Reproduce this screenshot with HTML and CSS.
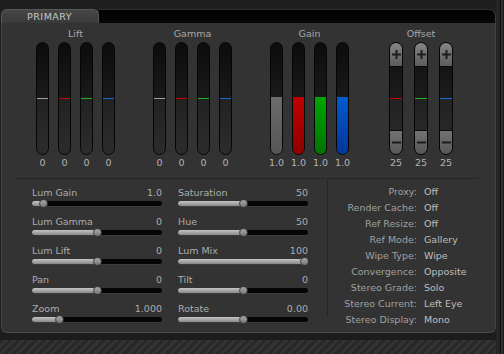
FILE: index.html
```html
<!DOCTYPE html>
<html lang="en">
<head>
  <meta charset="UTF-8">
  <title>Primary</title>
  <link rel="stylesheet" href="styles.css">
</head>
<body>
  <div class="main">
    <div class="top-space"></div>
    <div class="tabs">
      <div class="tab">PRIMARY</div>
      <div class="tab-bar"></div>
    </div>

    <div class="panel">
      <!-- Faders -->
      <div class="wheels">
        <div class="group">
          <div class="group-title">Lift</div>
          <div class="faders">
            <div class="col"><div class="fader"><span class="mark white"></span></div><span class="num">0</span></div>
            <div class="col"><div class="fader"><span class="mark red"></span></div><span class="num">0</span></div>
            <div class="col"><div class="fader"><span class="mark green"></span></div><span class="num">0</span></div>
            <div class="col"><div class="fader"><span class="mark blue"></span></div><span class="num">0</span></div>
          </div>
        </div>
        <div class="group">
          <div class="group-title">Gamma</div>
          <div class="faders">
            <div class="col"><div class="fader"><span class="mark white"></span></div><span class="num">0</span></div>
            <div class="col"><div class="fader"><span class="mark red"></span></div><span class="num">0</span></div>
            <div class="col"><div class="fader"><span class="mark green"></span></div><span class="num">0</span></div>
            <div class="col"><div class="fader"><span class="mark blue"></span></div><span class="num">0</span></div>
          </div>
        </div>
        <div class="group">
          <div class="group-title">Gain</div>
          <div class="faders">
            <div class="col"><div class="fader"><span class="level white"></span></div><span class="num">1.0</span></div>
            <div class="col"><div class="fader"><span class="level red"></span></div><span class="num">1.0</span></div>
            <div class="col"><div class="fader"><span class="level green"></span></div><span class="num">1.0</span></div>
            <div class="col"><div class="fader"><span class="level blue"></span></div><span class="num">1.0</span></div>
          </div>
        </div>
        <div class="group offset">
          <div class="group-title">Offset</div>
          <div class="faders">
            <div class="col">
              <div class="fader stepper">
                <div class="btn"><svg width="9" height="9" viewBox="0 0 9 9"><path d="M4.5 0v9M0 4.5h9" stroke="#1c1c1c" stroke-width="2"/></svg></div>
                <div class="mid"><span class="mark red"></span></div>
                <div class="btn"><svg width="9" height="9" viewBox="0 0 9 9"><path d="M0 4.5h9" stroke="#1c1c1c" stroke-width="2"/></svg></div>
              </div>
              <span class="num">25</span>
            </div>
            <div class="col">
              <div class="fader stepper">
                <div class="btn"><svg width="9" height="9" viewBox="0 0 9 9"><path d="M4.5 0v9M0 4.5h9" stroke="#1c1c1c" stroke-width="2"/></svg></div>
                <div class="mid"><span class="mark green"></span></div>
                <div class="btn"><svg width="9" height="9" viewBox="0 0 9 9"><path d="M0 4.5h9" stroke="#1c1c1c" stroke-width="2"/></svg></div>
              </div>
              <span class="num">25</span>
            </div>
            <div class="col">
              <div class="fader stepper">
                <div class="btn"><svg width="9" height="9" viewBox="0 0 9 9"><path d="M4.5 0v9M0 4.5h9" stroke="#1c1c1c" stroke-width="2"/></svg></div>
                <div class="mid"><span class="mark blue"></span></div>
                <div class="btn"><svg width="9" height="9" viewBox="0 0 9 9"><path d="M0 4.5h9" stroke="#1c1c1c" stroke-width="2"/></svg></div>
              </div>
              <span class="num">25</span>
            </div>
          </div>
        </div>
      </div>

      <div class="rule"></div>

      <!-- Sliders and settings -->
      <div class="controls">
        <div class="slider-col">
          <div class="slider"><div class="head"><span>Lum Gain</span><span>1.0</span></div><div class="track" style="--v:8.5%"><div class="fill"></div><div class="knob"></div></div></div>
          <div class="slider"><div class="head"><span>Lum Gamma</span><span>0</span></div><div class="track" style="--v:50%"><div class="fill"></div><div class="knob"></div></div></div>
          <div class="slider"><div class="head"><span>Lum Lift</span><span>0</span></div><div class="track" style="--v:50%"><div class="fill"></div><div class="knob"></div></div></div>
          <div class="slider"><div class="head"><span>Pan</span><span>0</span></div><div class="track" style="--v:50%"><div class="fill"></div><div class="knob"></div></div></div>
          <div class="slider"><div class="head"><span>Zoom</span><span>1.000</span></div><div class="track" style="--v:21.5%"><div class="fill"></div><div class="knob"></div></div></div>
        </div>
        <div class="slider-col">
          <div class="slider"><div class="head"><span>Saturation</span><span>50</span></div><div class="track" style="--v:50%"><div class="fill"></div><div class="knob"></div></div></div>
          <div class="slider"><div class="head"><span>Hue</span><span>50</span></div><div class="track" style="--v:50%"><div class="fill"></div><div class="knob"></div></div></div>
          <div class="slider"><div class="head"><span>Lum Mix</span><span>100</span></div><div class="track" style="--v:97%"><div class="fill"></div><div class="knob"></div></div></div>
          <div class="slider"><div class="head"><span>Tilt</span><span>0</span></div><div class="track" style="--v:50%"><div class="fill"></div><div class="knob"></div></div></div>
          <div class="slider"><div class="head"><span>Rotate</span><span>0.00</span></div><div class="track" style="--v:50%"><div class="fill"></div><div class="knob"></div></div></div>
        </div>
        <div class="vline"></div>
        <div class="info">
          <div class="info-row"><span class="key">Proxy:</span><span class="val">Off</span></div>
          <div class="info-row"><span class="key">Render Cache:</span><span class="val">Off</span></div>
          <div class="info-row"><span class="key">Ref Resize:</span><span class="val">Off</span></div>
          <div class="info-row"><span class="key">Ref Mode:</span><span class="val">Gallery</span></div>
          <div class="info-row"><span class="key">Wipe Type:</span><span class="val">Wipe</span></div>
          <div class="info-row"><span class="key">Convergence:</span><span class="val">Opposite</span></div>
          <div class="info-row"><span class="key">Stereo Grade:</span><span class="val">Solo</span></div>
          <div class="info-row"><span class="key">Stereo Current:</span><span class="val">Left Eye</span></div>
          <div class="info-row"><span class="key">Stereo Display:</span><span class="val">Mono</span></div>
        </div>
      </div>
    </div>

    <div class="shade"></div>
    <div class="carbon"></div>
  </div>
  <div class="edge"></div>
</body>
</html>
```

FILE: styles.css
```css
/* Base */
* {
  box-sizing: border-box;
}

html, body {
  margin: 0;
  padding: 0;
}

body {
  width: 504px;
  height: 354px;
  overflow: hidden;
  display: flex;
  background: #1f1f1f;
  font-family: "DejaVu Sans", sans-serif;
  font-size: 9.5px;
  color: #adadad;
}

.main {
  width: 496px;
  display: flex;
  flex-direction: column;
}

/* right window edge */
.edge {
  flex: 1;
  background: linear-gradient(90deg, #252525 0 4px, #0e0e0e 4px 5px, #303030 5px 7px, #1a1a1a 7px);
}

.top-space {
  height: 9px;
}

/* Tabs */
.tabs {
  height: 14px;
  display: flex;
  margin-left: 1px;
}

.tab {
  width: 98px;
  padding-left: 25px;
  border: 1px solid #575757;
  border-bottom: none;
  border-radius: 6px 6px 0 0;
  background: linear-gradient(#474747, #393939);
  color: #c6c6c6;
  line-height: 13px;
  letter-spacing: 0.5px;
}

.tab-bar {
  flex: 1;
  background: linear-gradient(#000, #080808);
  border-top: 1px solid #2e2e2e;
  border-right: 1px solid #3c3c3c;
  border-radius: 0 7px 0 0;
}

/* Panel */
.panel {
  height: 310px;
  margin-left: 1px;
  border: 1px solid #444;
  border-top: none;
  border-bottom-color: #4a4a4a;
  border-radius: 0 0 6px 6px;
  background: #333;
}

.wheels {
  display: flex;
  align-items: flex-start;
  padding: 5px 0 0 34px;
}

.group {
  display: flex;
  flex-direction: column;
  align-items: center;
}

.group + .group {
  margin-left: 38px;
}

.group.offset {
  margin-left: 40px;
}

.group-title {
  line-height: 12px;
  margin-bottom: 2px;
  color: #a8a8a8;
}

.faders {
  display: flex;
  gap: 9px;
}

.offset .faders {
  gap: 11px;
}

.col {
  width: 13px;
  display: flex;
  flex-direction: column;
  align-items: center;
}

.offset .col {
  width: 14px;
}

.fader {
  position: relative;
  width: 100%;
  height: 113px;
  border: 1px solid #060606;
  border-radius: 7px;
  background: linear-gradient(#0c0c0c, #1a1a1a 50%, #222 50%, #2c2c2c);
  overflow: hidden;
}

.mark {
  position: absolute;
  left: 0;
  right: 0;
  top: 55px;
  height: 1px;
}

.mark.white { background: #a0a0a0; }
.mark.red { background: #c40000; }
.mark.green { background: #20b020; }
.mark.blue { background: #1a66d8; }

.level {
  position: absolute;
  left: 0;
  right: 0;
  top: 54px;
  bottom: 0;
}

.level.white { background: linear-gradient(#6c6c6c, #555); }
.level.red { background: linear-gradient(#c00000, #8e0000); }
.level.green { background: linear-gradient(#00a600, #007400); }
.level.blue { background: linear-gradient(#005ad0, #00379a); }

.num {
  margin-top: 2px;
  line-height: 12px;
  color: #b4b4b4;
  white-space: nowrap;
}

/* Offset steppers */
.stepper {
  display: flex;
  flex-direction: column;
  background: #1b1b1b;
}

.btn {
  height: 24px;
  display: flex;
  align-items: center;
  justify-content: center;
  background: linear-gradient(#858585, #5c5c5c);
}

.btn:first-child {
  border-bottom: 1px solid #0a0a0a;
}

.btn:last-child {
  border-top: 1px solid #0a0a0a;
  background: linear-gradient(#727272, #575757);
}

.mid {
  position: relative;
  flex: 1;
  background: linear-gradient(#141414, #1c1c1c 50%, #222 50%, #272727);
}

.mid .mark {
  top: 31px;
}

.rule {
  width: 463px;
  height: 1px;
  margin: 9px 0 0 13px;
  background: #262626;
}

/* Sliders */
.controls {
  display: flex;
  align-items: flex-start;
  padding-left: 30px;
}

.slider-col {
  width: 130px;
  display: flex;
  flex-direction: column;
  gap: 10px;
  padding-top: 7.5px;
}

.slider-col + .slider-col {
  margin-left: 16px;
}

.head {
  display: flex;
  justify-content: space-between;
  line-height: 12px;
}

.track {
  position: relative;
  height: 5px;
  margin-top: 2px;
  border-radius: 3px;
  background: #050505;
  box-shadow: 0 1px 0 #3c3c3c;
}

.fill {
  width: var(--v);
  height: 100%;
  border-radius: 3px 0 0 3px;
  background: linear-gradient(#c4c4c4, #888);
}

.knob {
  position: absolute;
  top: -2px;
  left: var(--v);
  width: 9px;
  height: 9px;
  margin-left: -4.5px;
  border-radius: 50%;
  border: 1px solid #3a3a3a;
  background: linear-gradient(#a8a8a8, #777);
}

.vline {
  width: 1px;
  height: 136px;
  margin: 1px 0 0 19px;
  background: #262626;
}

/* Settings list */
.info {
  padding-top: 4.7px;
}

.info-row {
  display: flex;
  line-height: 16px;
  white-space: nowrap;
}

.key {
  width: 89px;
  text-align: right;
  color: #a0a0a0;
}

.val {
  margin-left: 7px;
  color: #bebebe;
}

/* Below the panel */
.shade {
  height: 7px;
  background: #1c1c1c;
}

.carbon {
  flex: 1;
  background: repeating-linear-gradient(135deg, #282828 0 3px, #333 3px 6px);
}
```
